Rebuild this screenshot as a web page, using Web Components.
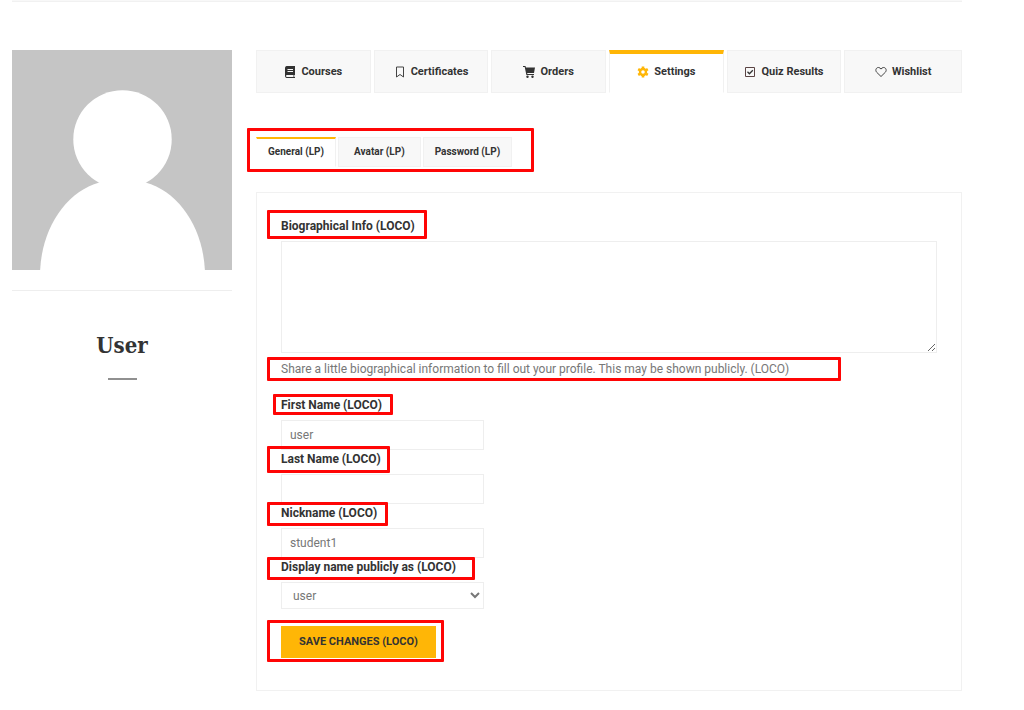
<!DOCTYPE html>
<html lang="en">
<head>
<meta charset="utf-8">
<meta name="viewport" content="width=device-width, initial-scale=1">
<title>Profile settings</title>
<style>
  html { background: #fff; }
  body { margin: 0; font: 12px/20px Roboto, "Liberation Sans", sans-serif; color: #777; }
</style>
</head>
<body>
<profile-page>
  <user-card slot="aside" name="User"></user-card>
  <profile-tabs>
    <profile-tab icon="book">Courses</profile-tab>
    <profile-tab icon="bookmark">Certificates</profile-tab>
    <profile-tab icon="cart">Orders</profile-tab>
    <profile-tab icon="gear" active>Settings</profile-tab>
    <profile-tab icon="check">Quiz Results</profile-tab>
    <profile-tab icon="heart">Wishlist</profile-tab>
  </profile-tabs>
  <section-tabs></section-tabs>
  <settings-form></settings-form>
</profile-page>

<script>
const define = (name, html, setup) => {
  const template = document.createElement('template');
  template.innerHTML = html;
  customElements.define(name, class extends HTMLElement {
    constructor() {
      super();
      this.attachShadow({ mode: 'open' }).append(template.content.cloneNode(true));
    }
    connectedCallback() { if (setup) setup(this, this.shadowRoot); }
  });
};

/* Red frame drawn over its content; reach = top right bottom left, in px beyond it */
define('call-out', `
  <style>
    :host { display: inline-block; position: relative; vertical-align: top; }
    .frame { position: absolute; z-index: 1; border: 3px solid #ff0505; border-radius: 1px; pointer-events: none; }
  </style>
  <slot></slot><div class="frame"></div>`,
  (el, root) => {
    root.querySelector('.frame').style.inset =
      el.getAttribute('reach').split(' ').map(n => -n + 'px').join(' ');
  });

define('profile-page', `
  <style>
    :host { display: block; padding: 0 62px 18px 12px; }
    header { height: 1px; border-bottom: 1px solid #f1f1f1; background: #f8f8f8; margin-bottom: 48px; }
    .columns { display: grid; grid-template-columns: 220px minmax(0, 1fr); gap: 24px; align-items: start; }
  </style>
  <header></header>
  <div class="columns">
    <aside><slot name="aside"></slot></aside>
    <main><slot></slot></main>
  </div>`);

define('user-card', `
  <style>
    :host { display: block; text-align: center; }
    svg { display: block; width: 100%; }
    .picture { padding-bottom: 20px; border-bottom: 1px solid #eee; }
    h1 { margin: 38px 0 0; font: bold 22px/32px "Roboto Slab", "DejaVu Serif Condensed", "DejaVu Serif", serif; color: #333; }
    hr { width: 29px; height: 2px; margin: 17px auto 0; border: 0; background: #909090; }
  </style>
  <div class="picture">
    <svg viewBox="0 0 219 219" role="img" aria-label="Avatar">
      <path fill="#c5c5c5" d="M0 0h219v219H0z"/>
      <circle cx="110" cy="89" r="49" fill="#fff"/>
      <path fill="#fff" d="M28 219C30 177 54 141 87 132Q110 126 133 132C166 141 190 177 192 219z"/>
    </svg>
  </div>
  <h1></h1>
  <hr>`,
  (el, root) => { root.querySelector('h1').textContent = el.getAttribute('name'); });

define('profile-tabs', `
  <style>
    :host { display: block; }
    nav { display: grid; grid-template-columns: repeat(6, 1fr); }
    ::slotted(*) { margin-right: 3px; }
    ::slotted(:last-child) { margin-right: 0; }
  </style>
  <nav aria-label="Profile"><slot></slot></nav>`);

const icons = {
  book: '<path fill="#333" fill-rule="evenodd" d="M2.5 0H11v9h-.7v2H11v1H2.500A2 2 0 0 1 1 10V2A2 2 0 0 1 2.500 0zM3.500 3v1H9V3zM3.500 5v1H9V5zM3 9a1 1 0 0 0 0 2h6.500V9z"/>',
  bookmark: '<path fill="none" stroke="#444" d="M2.500 1h7v10L6 8.500 2.500 11z"/>',
  cart: '<path fill="#333" d="M0 0h2.500l.4 1.500H12L11 7H4.200l.2 1H11v1H3.400L1.700 1H0z"/><circle cx="4.500" cy="10.700" r="1.200" fill="#333"/><circle cx="9.500" cy="10.700" r="1.200" fill="#333"/>',
  gear: '<circle cx="6" cy="6" r="3" fill="none" stroke="#ffb606" stroke-width="2.400"/><path stroke="#ffb606" stroke-width="2.600" d="M6 .4v2M6 9.600v2M1.200 3.200l1.700 1M9.100 7.800l1.700 1M1.200 8.800l1.700-1M9.100 4.200l1.700-1"/>',
  check: '<path fill="none" stroke="#5a4444" d="M1.500 1.500h9v9h-9z"/><path fill="none" stroke="#333" stroke-width="1.300" d="M3.500 5.800l1.900 1.900L8.800 4.200"/>',
  heart: '<path fill="none" stroke="#444" d="M6 10.500L1.600 6.200C-.2 3.900 1.500 1.200 3.700 1.500 4.900 1.600 5.500 2.400 6 3.100c.5-.7 1.100-1.500 2.300-1.600C10.500 1.200 12.200 3.900 10.400 6.200z"/>'
};

define('profile-tab', `
  <style>
    :host { display: block; }
    a { display: flex; align-items: center; justify-content: center; gap: 5px; box-sizing: border-box; height: 43px;
        border: 1px solid #f1f1f1; background: #f8f8f8; color: #333; font-weight: 700; font-size: 11px; text-decoration: none; }
    :host([active]) a { border-top: 4px solid #ffb606; border-bottom-color: #fff; background: #fff; padding-bottom: 3px; }
    svg { width: 12px; height: 12px; overflow: visible; }
  </style>
  <a href="#"><svg viewBox="0 0 12 12" aria-hidden="true"></svg><slot></slot></a>`,
  (el, root) => { root.querySelector('svg').innerHTML = icons[el.getAttribute('icon')]; });

define('section-tabs', `
  <style>
    :host { display: flex; margin: 44px 0 25px; }
    nav { display: flex; gap: 2px; }
    a { box-sizing: border-box; height: 30px; padding: 0 11px; border: 1px solid #f1f1f1; background: #f8f8f8;
        font-size: 10px; line-height: 28px; font-weight: 700; color: #333; text-decoration: none; }
    a.active { border-top: 2px solid #ffb606; border-left-color: #fff; border-bottom-color: #fff; background: #fff; line-height: 26px; }
    a:nth-child(2) { padding: 0 15px; }
  </style>
  <call-out reach="9 22 5 9">
    <nav aria-label="Settings">
      <a class="active" href="#">General (LP)</a><a href="#">Avatar (LP)</a><a href="#">Password (LP)</a>
    </nav>
  </call-out>`);

define('settings-form', `
  <style>
    :host { display: block; border: 1px solid #f1f1f1; padding: 24px 24px 32px; }
    form { display: flex; flex-direction: column; align-items: flex-start; }
    label { display: block; line-height: 18px; font-weight: 700; color: #333; }
    textarea, input, select { box-sizing: border-box; display: block; margin: 6px 0 0; border: 1px solid #eee; border-radius: 0;
        background: #fff; color: #777; font: 12px/20px Roboto, "Liberation Sans", sans-serif; }
    textarea { width: 100%; height: 112px; padding: 8px; resize: vertical; }
    p { margin: 0; line-height: 20px; }
    .hint { margin: 6px 0 17px; }
    input { width: 203px; height: 30px; padding: 0 8px; }
    select { width: 203px; height: 27px; padding: 0 0 0 7px; }
    .save { margin-top: 17px; }
    button { display: block; height: 32px; border: 0; padding: 0 18px; background: #ffb606; color: #333;
        font: 700 11px/32px Roboto, "Liberation Sans", sans-serif; text-transform: uppercase; }
  </style>
  <form>
    <call-out reach="7 12 4 14"><label for="bio">Biographical Info (LOCO)</label></call-out>
    <textarea id="bio"></textarea>
    <call-out class="hint" reach="2 52 2 14"><p>Share a little biographical information to fill out your profile. This may be shown publicly. (LOCO)</p></call-out>
    <call-out reach="2 11 1 8"><label for="first">First Name (LOCO)</label></call-out>
    <input id="first" type="text" value="user">
    <call-out reach="4 9 5 14"><label for="last">Last Name (LOCO)</label></call-out>
    <input id="last" type="text">
    <call-out reach="2 11 4 14"><label for="nick">Nickname (LOCO)</label></call-out>
    <input id="nick" type="text" value="student1">
    <call-out reach="1 19 4 14"><label for="display">Display name publicly as (LOCO)</label></call-out>
    <select id="display"><option>user</option></select>
    <call-out class="save" reach="6 8 4 14"><button type="button">Save changes (LOCO)</button></call-out>
  </form>`);
</script>
</body>
</html>
